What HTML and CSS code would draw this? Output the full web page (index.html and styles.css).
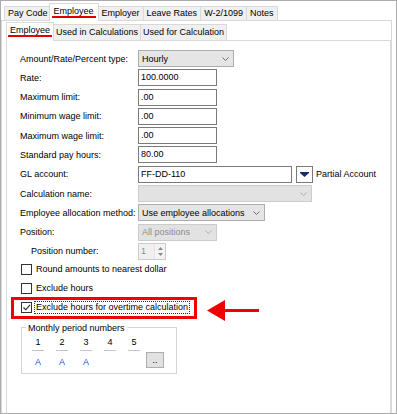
FILE: index.html
```html
<!DOCTYPE html>
<html>
<head>
<meta charset="utf-8">
<link rel="stylesheet" href="styles.css">
</head>
<body>
<div class="window">
  <div class="tabs">
    <div class="tab">Pay Code</div>
    <div class="tab active"><span class="mark">Employee</span></div>
    <div class="tab">Employer</div>
    <div class="tab">Leave Rates</div>
    <div class="tab">W-2/1099</div>
    <div class="tab">Notes</div>
  </div>
  <div class="panel">
    <div class="subtabs">
      <div class="subtab active"><span class="mark">Employee</span></div>
      <div class="subtab">Used in Calculations</div>
      <div class="subtab">Used for Calculation</div>
    </div>
    <div class="subpanel">
      <div class="form">
        <label>Amount/Rate/Percent type:</label>
        <div class="select w96"><span class="val">Hourly</span><svg class="chev" viewBox="0 0 7 4"><path d="M0.5 0.5 L3.5 3.5 L6.5 0.5"/></svg></div>

        <label>Rate:</label>
        <div class="input w79">100.0000</div>

        <label>Maximum limit:</label>
        <div class="input w79">.00</div>

        <label>Minimum wage limit:</label>
        <div class="input w79">.00</div>

        <label>Maximum wage limit:</label>
        <div class="input w79">.00</div>

        <label>Standard pay hours:</label>
        <div class="input w79">80.00</div>

        <label>GL account:</label>
        <div class="gl">
          <div class="input w154">FF-DD-110</div>
          <div class="lookup"><svg viewBox="0 0 9 5"><path d="M0 0 H9 V1 L4.5 5 L0 1 Z"/></svg></div>
          <span class="partial">Partial Account</span>
        </div>

        <label>Calculation name:</label>
        <div class="select disabled w174"><span class="val"></span><svg class="chev" viewBox="0 0 7 4"><path d="M0.5 0.5 L3.5 3.5 L6.5 0.5"/></svg></div>

        <label>Employee allocation method:</label>
        <div class="select w127"><span class="val">Use employee allocations</span><svg class="chev" viewBox="0 0 7 4"><path d="M0.5 0.5 L3.5 3.5 L6.5 0.5"/></svg></div>

        <label>Position:</label>
        <div class="select disabled w79"><span class="val">All positions</span><svg class="chev" viewBox="0 0 7 4"><path d="M0.5 0.5 L3.5 3.5 L6.5 0.5"/></svg></div>

        <label class="indent">Position number:</label>
        <div class="spinner">
          <span class="val">1</span>
          <span class="arrows">
            <svg viewBox="0 0 5 3"><path d="M0 3 L2.5 0 L5 3 Z"/></svg>
            <svg viewBox="0 0 5 3"><path d="M0 0 L2.5 3 L5 0 Z"/></svg>
          </span>
        </div>
      </div>

      <div class="checks">
        <div class="check"><span class="box"></span><span class="text">Round amounts to nearest dollar</span></div>
        <div class="check"><span class="box"></span><span class="text">Exclude hours</span></div>
        <div class="check highlight">
          <span class="box"><svg viewBox="0 0 9 9"><path d="M1.5 4.5 L3.8 6.8 L8 1.8"/></svg></span>
          <span class="text focus">Exclude hours for overtime calculation</span>
          <svg class="arrow" viewBox="0 0 52 21"><path d="M0 10.5 L18 0 L18 9 L52 9 L52 12 L18 12 L18 21 Z"/></svg>
        </div>
      </div>

      <fieldset class="group">
        <legend>Monthly period numbers</legend>
        <div class="periods">
          <div class="col"><span class="num">1</span><span class="letter">A</span></div>
          <div class="col"><span class="num">2</span><span class="letter">A</span></div>
          <div class="col"><span class="num">3</span><span class="letter">A</span></div>
          <div class="col"><span class="num">4</span><span class="letter"></span></div>
          <div class="col"><span class="num">5</span><span class="letter"></span></div>
          <div class="more">..</div>
        </div>
      </fieldset>
    </div>
  </div>
</div>
</body>
</html>
```

FILE: styles.css
```css
* { box-sizing: border-box; }

body {
  margin: 0;
  background: #fff;
  color: #000;
  font-family: "Liberation Sans", Arial, sans-serif;
  font-size: 9px;
}

.window {
  width: 397px;
  height: 414px;
  border: 1px solid #ababab;
  padding: 1px 4px 0 0;
  display: flex;
  flex-direction: column;
  overflow: hidden;
  background: #fff;
}

/* top tabs */
.tabs {
  display: flex;
  align-items: flex-end;
  height: 18px;
  padding-left: 3px;
}
.tab {
  height: 14px;
  padding: 0 3px;
  line-height: 13px;
  background: #f0f0f0;
  border: 1px solid #d9d9d9;
  border-bottom: none;
  margin-right: -1px;
  white-space: nowrap;
}
.tab.active {
  height: 18px;
  margin: 0 -1px -1px -2px;
  padding: 0 4px;
  line-height: 15px;
  background: #fff;
  position: relative;
  z-index: 1;
}
.mark {
  position: relative;
}
.mark::after {
  content: "";
  position: absolute;
  left: -2px;
  right: -2px;
  bottom: -2px;
  height: 2px;
  background: #e00000;
}

.panel {
  flex: 1;
  border: 1px solid #d9d9d9;
  border-bottom: none;
  background: #fff;
  padding: 1px 0 0 4px;
  display: flex;
  flex-direction: column;
}

/* sub tabs */
.subtabs {
  display: flex;
  align-items: flex-end;
  height: 18px;
}
.subtab {
  height: 16px;
  padding: 0 2px;
  line-height: 15px;
  background: #f0f0f0;
  border: 1px solid #d9d9d9;
  border-bottom: none;
  margin-right: -1px;
  white-space: nowrap;
}
.subtab.active {
  height: 19px;
  margin-bottom: -1px;
  padding: 0 3px;
  line-height: 15px;
  background: #fff;
  position: relative;
  z-index: 1;
}

.subpanel {
  flex: 1;
  border: 1px solid #d9d9d9;
  border-bottom: none;
  padding: 9px 0 0 13px;
}

/* form */
.form {
  display: grid;
  grid-template-columns: 118px 1fr;
  grid-auto-rows: 17px;
  row-gap: 2.3px;
  align-items: center;
}
.form label {
  white-space: nowrap;
}
.form label.indent {
  padding-left: 11px;
}

.input {
  height: 17px;
  border: 1px solid #7a7a7a;
  background: #fff;
  padding-left: 2px;
  line-height: 15px;
  white-space: nowrap;
}
.w79 { width: 79px; }
.w96 { width: 96px; }
.w127 { width: 127px; }
.w154 { width: 154px; }
.w174 { width: 174px; }

.select {
  height: 17px;
  display: flex;
  align-items: center;
  border: 1px solid #adadad;
  background: #e5e5e5;
  padding: 0 4px 0 3px;
}
.select .val {
  flex: 1;
  white-space: nowrap;
  overflow: hidden;
}
.select.disabled {
  background: #e2e2e2;
  border-color: #cccccc;
  color: #8d8d8d;
}
.chev {
  width: 7px;
  height: 4px;
  fill: none;
  stroke: #606060;
  stroke-width: 0.9;
}
.select.disabled .chev {
  stroke: #a8a8a8;
}

.gl {
  display: flex;
  align-items: center;
  height: 17px;
}
.lookup {
  width: 17px;
  height: 17px;
  margin-left: 4px;
  border: 1px solid #7a7a7a;
  background: #fff;
  display: flex;
  align-items: center;
  justify-content: center;
}
.lookup svg {
  width: 9px;
  height: 5px;
  fill: #1c2a6a;
}
.partial {
  margin-left: 3px;
  white-space: nowrap;
}

.spinner {
  width: 28px;
  height: 17px;
  display: flex;
  border: 1px solid #cccccc;
  background: #f0f0f0;
  color: #8d8d8d;
}
.spinner .val {
  flex: 1;
  padding-left: 2px;
  line-height: 15px;
}
.spinner .arrows {
  width: 11px;
  display: flex;
  flex-direction: column;
  align-items: center;
  justify-content: space-around;
  padding: 2px 0;
  border-left: 1px solid #e4e4e4;
  background: #f4f4f4;
}
.spinner .arrows svg {
  width: 5px;
  height: 3px;
  fill: #8a8a8a;
}

/* checkboxes */
.checks {
  display: flex;
  flex-direction: column;
}
.check {
  height: 19px;
  display: flex;
  align-items: center;
  padding-left: 1px;
  width: fit-content;
}
.box {
  width: 11px;
  height: 11px;
  border: 1px solid #333;
  background: #fff;
  display: flex;
  align-items: center;
  justify-content: center;
}
.box svg {
  width: 9px;
  height: 9px;
  fill: none;
  stroke: #222;
  stroke-width: 1.1;
}
.check .text {
  margin-left: 3px;
  padding: 0 1px;
  line-height: 11px;
  white-space: nowrap;
}
.check .focus {
  outline: 1px dotted #333;
  outline-offset: 0;
}
.check.highlight {
  position: relative;
}
.check.highlight::before {
  content: "";
  position: absolute;
  left: -9px;
  right: -8px;
  top: -1px;
  bottom: -2px;
  border: 3px solid #f00000;
}
.arrow {
  position: absolute;
  left: 187px;
  top: 2px;
  width: 52px;
  height: 21px;
  fill: #f00000;
}

/* group box */
.group {
  margin: 5px 0 0 1px;
  width: 156px;
  min-width: 0;
  border: 1px solid #d5d5d5;
  padding: 2px 0 5px 10px;
}
.group legend {
  padding: 0 2px;
  margin-left: -6px;
  line-height: 12px;
}
.periods {
  display: flex;
  align-items: flex-end;
  gap: 12px;
}
.col {
  width: 12px;
  display: flex;
  flex-direction: column;
  align-items: center;
}
.num {
  width: 12px;
  height: 15px;
  line-height: 12px;
  text-align: center;
  border-bottom: 1px solid #c4c4c4;
}
.letter {
  height: 12px;
  margin-top: 5px;
  line-height: 12px;
  color: #2c50d8;
}
.more {
  width: 18px;
  height: 16px;
  margin-left: -6px;
  border: 1px solid #adadad;
  background: #e1e1e1;
  text-align: center;
  line-height: 14px;
}
```
